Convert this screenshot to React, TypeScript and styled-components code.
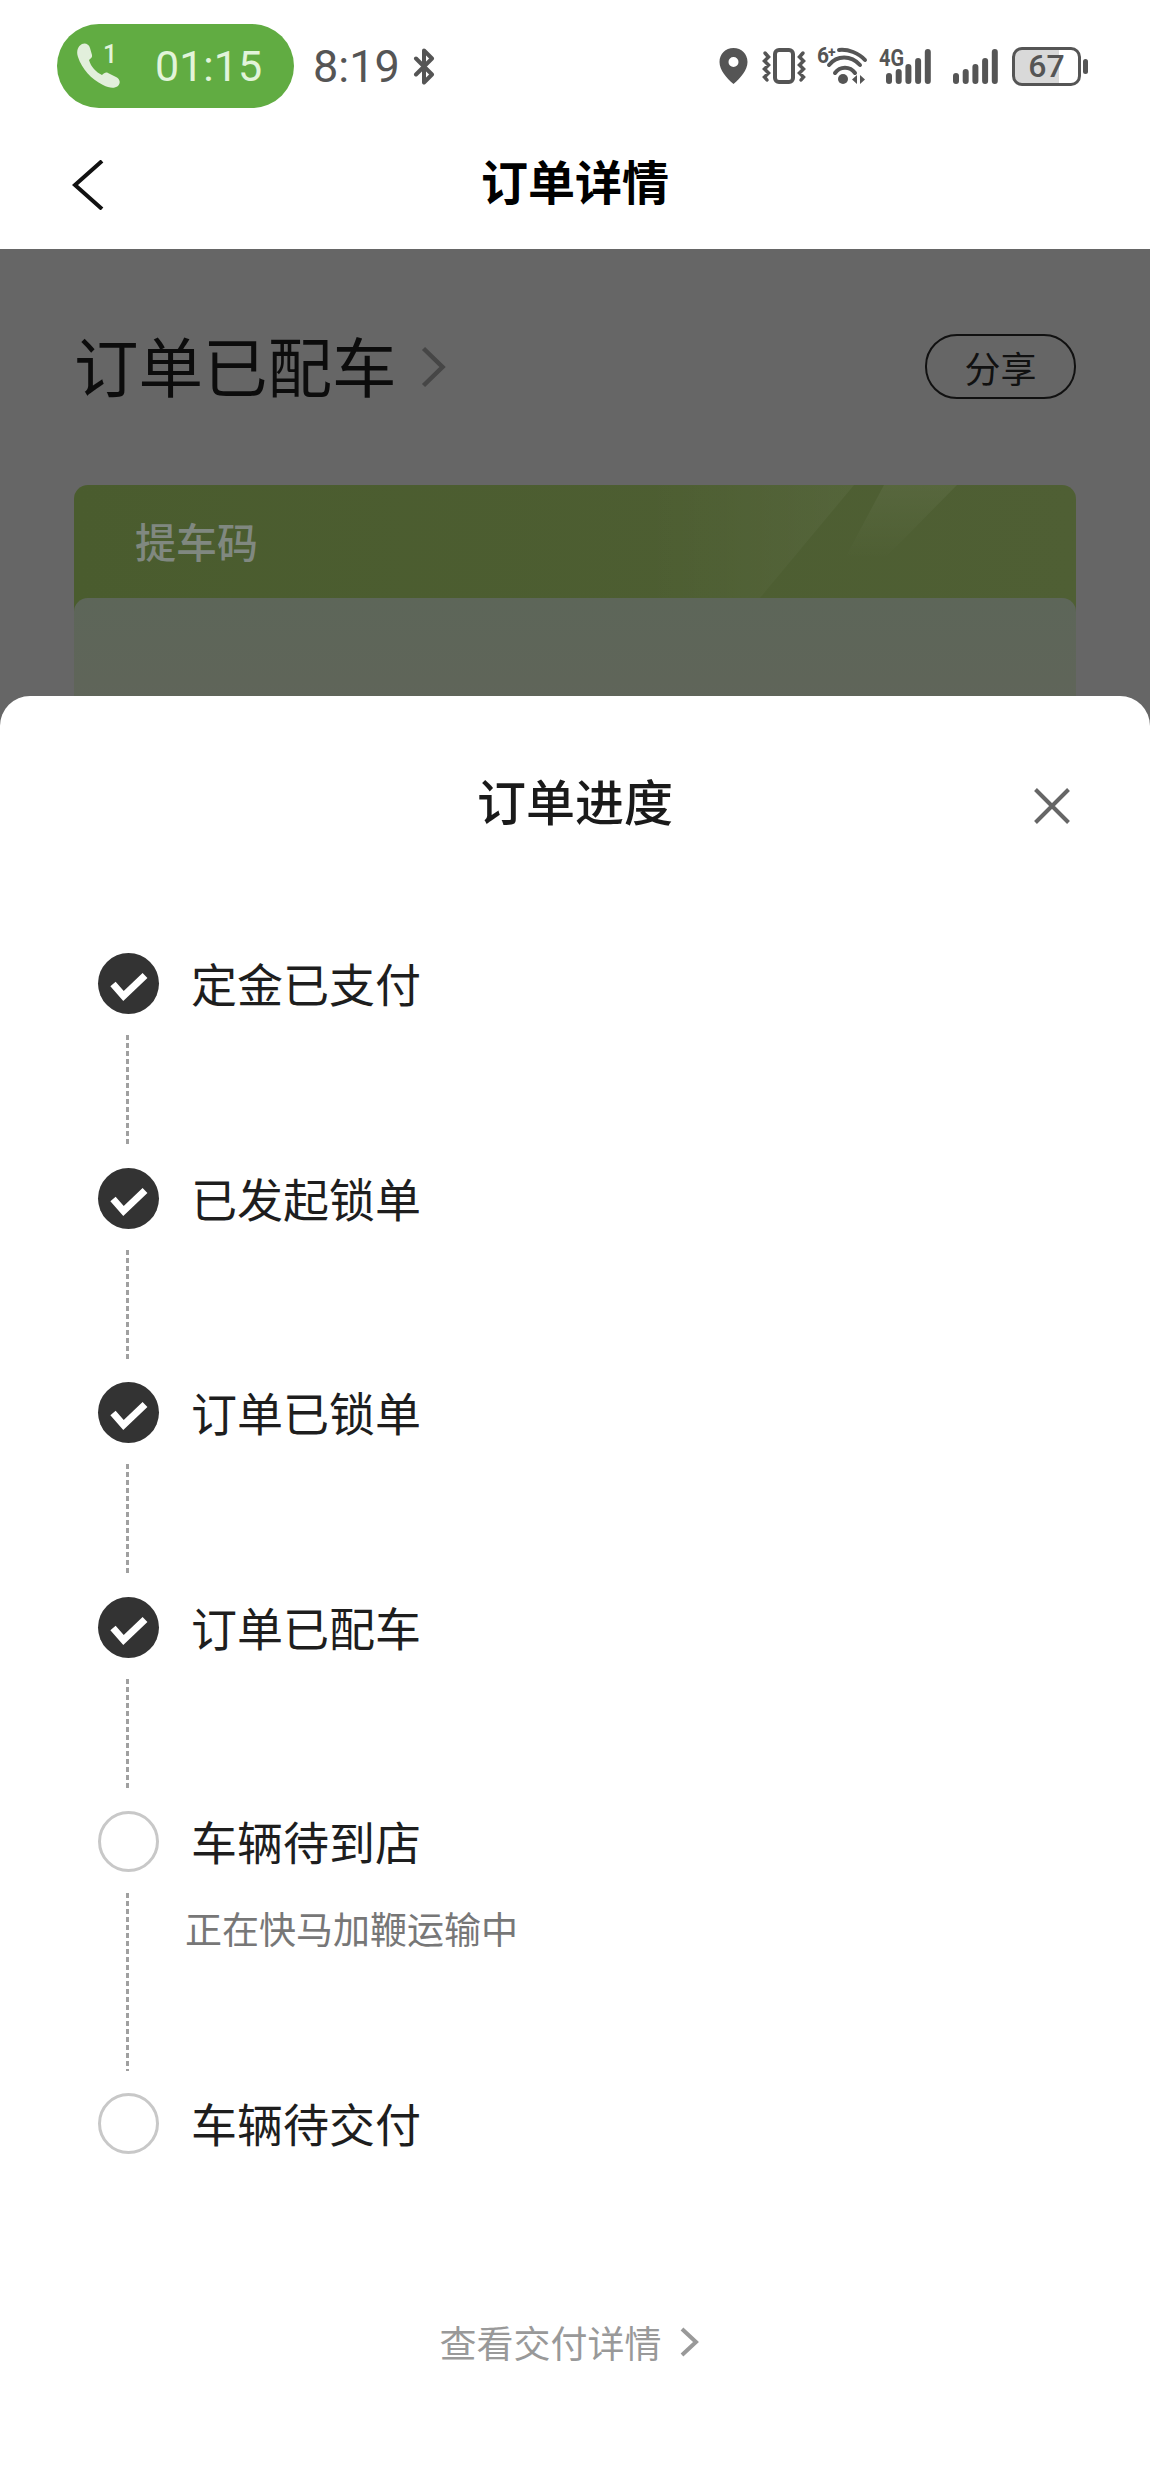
import styled, { createGlobalStyle } from "styled-components";

const GlobalStyle = createGlobalStyle`
    html, body {
        margin: 0;
        padding: 0;
        background: #fff;
    }
    * {
        box-sizing: border-box;
    }
    body {
        font-family: "Noto Sans CJK SC", "Noto Sans", sans-serif;
    }
`

const Screen = styled.div`
    width: 1150px;
    height: 2483px;
    overflow: hidden;
    background: #fff;
`

const StatusBar = styled.div`
    height: 132px;
    padding: 0 62px 0 57px;
    display: flex;
    align-items: center;
    justify-content: space-between;
    color: #555;
`

const StatusLeft = styled.div`
    display: flex;
    align-items: center;
`

const CallPill = styled.div`
    width: 237px;
    height: 84px;
    border-radius: 42px;
    background: #61ac42;
    color: #e2f4da;
    display: flex;
    align-items: center;
    padding-left: 19px;
    font-family: Roboto, sans-serif;
    font-size: 43px;
`

const CallIcon = styled.svg`
    display: block;
    overflow: visible;
`

const CallTime = styled.span`
    margin-left: 33px;
    line-height: 1;
`

const ClockText = styled.span`
    margin-left: 19px;
    margin-right: 13px;
    font-family: Roboto, sans-serif;
    font-size: 45px;
    line-height: 1;
`

const StatusRight = styled.div`
    display: flex;
    align-items: center;
`

const StatusIcon = styled.svg<{ $gap?: number }>`
    display: block;
    overflow: visible;
    margin-left: ${p => p.$gap ?? 0}px;
`

const Battery = styled.div`
    position: relative;
    width: 69px;
    height: 39px;
    margin-left: 15px;
    margin-right: 7px;
    border: 3px solid #555;
    border-radius: 10px;
    background: linear-gradient(90deg, #d9d9d9 70%, #fff 70%);
    display: flex;
    align-items: center;
    justify-content: center;
    font-family: Roboto, sans-serif;
    font-size: 32px;
    font-weight: 500;
    line-height: 1;

    &::after {
        content: "";
        position: absolute;
        right: -10px;
        top: 9px;
        width: 5px;
        height: 15px;
        border-radius: 3px;
        background: #555;
    }
`

const NavBar = styled.div`
    height: 117px;
    padding: 0 72px 21px;
    display: grid;
    grid-template-columns: 1fr auto 1fr;
    align-items: center;
`

const BackIcon = styled.svg`
    display: block;
    margin-top: 9px;
`

const NavTitle = styled.h1`
    margin: 0;
    font-size: 47px;
    font-weight: 700;
    line-height: 60px;
    color: #000;
`

const Scrim = styled.div`
    background: #666;
`

const Dimmed = styled.section`
    height: 447px;
    padding: 85px 74px 0;
    overflow: hidden;
`

const StatusRow = styled.div`
    height: 65px;
    display: flex;
    align-items: center;
    justify-content: space-between;
`

const StatusHeading = styled.div`
    display: flex;
    align-items: center;
    gap: 22px;
`

const HeadingText = styled.h2`
    margin: 0 0 4px;
    font-size: 64.5px;
    font-weight: 400;
    line-height: 65px;
    color: #0c0c0c;
`

const ShareButton = styled.button`
    width: 151px;
    height: 65px;
    border: 2px solid #111;
    border-radius: 32px;
    background: transparent;
    padding: 0;
    font-family: inherit;
    font-size: 36px;
    line-height: 1;
    color: #111;
`

const CodeCard = styled.div`
    position: relative;
    margin-top: 86px;
    height: 300px;
    border-radius: 14px;
    background: linear-gradient(90deg, #4a5c2e 0%, #4f5f34 100%);
    overflow: hidden;

    /* the two faint diagonal light bands on the card */
    &::before,
    &::after {
        content: "";
        position: absolute;
        top: 0;
        left: 0;
        right: 0;
        height: 113px;
    }

    &::before {
        background: linear-gradient(90deg, rgba(255, 255, 255, 0) 570px, rgba(255, 255, 255, 0.04) 780px);
        clip-path: polygon(560px 0, 780px 0, 686px 113px, 500px 113px);
    }

    &::after {
        background: linear-gradient(180deg, rgba(255, 255, 255, 0.05), rgba(255, 255, 255, 0) 75px);
        clip-path: polygon(810px 0, 883px 0, 809px 75px, 770px 75px);
    }
`

const CodeLabel = styled.div`
    padding: 17px 0 0 61px;
    height: 113px;
    font-size: 41px;
    font-weight: 500;
    line-height: 76px;
    color: #808880;
`

const CodeBody = styled.div`
    position: relative;
    height: 187px;
    border-radius: 14px 14px 0 0;
    background: linear-gradient(180deg, #5d6659 0%, #5f6559 45%, #62645e 100%);
`

const Sheet = styled.section`
    height: 1787px;
    border-radius: 30px 30px 0 0;
    background: #fff;
    padding: 78px 80px 0 98px;
`

const SheetHeader = styled.div`
    display: grid;
    grid-template-columns: 1fr auto 1fr;
    align-items: start;
    height: 58px;
    margin-left: -18px;
`

const SheetTitle = styled.h2`
    margin: -3px 0 0;
    font-size: 49px;
    font-weight: 500;
    line-height: 58px;
    color: #1a1a1a;
`

const CloseSlot = styled.div`
    display: flex;
    justify-content: flex-end;
    margin-top: 14px;
`

const StepList = styled.div`
    margin-top: 121px;
    display: flex;
    flex-direction: column;
`

const Step = styled.div`
    display: flex;
    gap: 32px;
`

const Rail = styled.div`
    width: 61px;
    flex: none;
    display: flex;
    flex-direction: column;
    align-items: center;
`

const Circle = styled.div<{ $done: boolean }>`
    width: 61px;
    height: 61px;
    border-radius: 50%;
    flex: none;
    background: ${p => (p.$done ? "#333" : "#fff")};
    border: ${p => (p.$done ? "none" : "3px solid #c8c8c8")};
`

const Connector = styled.div<{ $height: number }>`
    width: 3px;
    height: ${p => p.$height}px;
    margin: 21px 3px 21.5px 0;
    background: repeating-linear-gradient(180deg, #a0a0a0 0 5px, transparent 5px 8px);
`

const StepText = styled.div`
    display: flex;
    flex-direction: column;
`

const StepLabel = styled.div`
    font-size: 46px;
    line-height: 58px;
    color: #1e1e1e;
`

const StepNote = styled.div`
    margin: 36.5px 0 0 -6px;
    font-size: 37px;
    line-height: 44px;
    color: #777;
`

const DetailLink = styled.a`
    margin: 163px 0 0 -98px;
    width: 1150px;
    height: 50px;
    display: flex;
    align-items: center;
    justify-content: center;
    gap: 16px;
    padding-right: 11px;
    font-size: 37px;
    line-height: 50px;
    color: #999;
`

const Chevron = ({ w, h, color, stroke }: { w: number; h: number; color: string; stroke: number }) => (
    <svg width={w} height={h} viewBox={`0 0 ${w} ${h}`} fill="none">
        <polyline points={`${stroke},${stroke} ${w - stroke},${h / 2} ${stroke},${h - stroke}`} stroke={color} strokeWidth={stroke} />
    </svg>
)

const Bars = ({ x }: { x: number }) => (
    <>
        {[11, 15, 20, 26, 35].map((h, i) => (
            <rect key={i} x={x + i * 9.7} y={36 - h} width="6" height={h} rx="3" fill="#555" />
        ))}
    </>
)

const steps = [
    { label: "定金已支付", done: true, line: 111 },
    { label: "已发起锁单", done: true, line: 111 },
    { label: "订单已锁单", done: true, line: 111 },
    { label: "订单已配车", done: true, line: 111 },
    { label: "车辆待到店", done: false, line: 178, note: "正在快马加鞭运输中" },
    { label: "车辆待交付", done: false },
]

const App = () => {
    return (
        <Screen>
            <GlobalStyle />
            <StatusBar>
                <StatusLeft>
                    <CallPill>
                        <CallIcon width="46" height="46" viewBox="0 0 46 46">
                            <path d="M6 1C9-.5 13 1 14 5l2 7c.5 2-1 3.5-3 5 2 7 7 12 13 15 2-2 4-3 6-2l8 4c4 2 5 6 2 9-4 3-9 2-15-1C15 36 6 26 2 14 0 8 2 3 6 1Z" fill="#e2efdc" />
                            <text x="27" y="20" fontFamily="Roboto, sans-serif" fontWeight="500" fontSize="25" fill="#e2f4da">1</text>
                        </CallIcon>
                        <CallTime>01:15</CallTime>
                    </CallPill>
                    <ClockText>8:19</ClockText>
                    <svg width="22" height="37" viewBox="0 0 22 37" fill="none">
                        <path d="M3 10.5 19 26.500 11 34.500V2.500L19 10.500 3 26.500" stroke="#555" strokeWidth="4" strokeLinejoin="round" strokeLinecap="round" />
                    </svg>
                </StatusLeft>
                <StatusRight>
                    <StatusIcon width="29" height="36" viewBox="0 0 28 36">
                        <path fillRule="evenodd" d="M14 0c8 0 14 6 14 14 0 8-7 16-14 22C7 30 0 22 0 14 0 6 6 0 14 0Zm0 9a5 5 0 1 0 0 10 5 5 0 0 0 0-10Z" fill="#555" />
                    </StatusIcon>
                    <StatusIcon $gap={14} width="44" height="36" viewBox="0 0 44 36" fill="none" stroke="#555" strokeLinecap="round">
                        <rect x="13" y="2" width="18" height="32" rx="4" strokeWidth="4" />
                        <path d="M3 5 6.500 9 2.500 13 6.500 17 2.500 21 6.500 25 2.500 29 5 32M41 5 37.500 9 41.500 13 37.500 17 41.500 21 37.500 25 41.500 29 39 32" strokeWidth="3.500" />
                    </StatusIcon>
                    <StatusIcon $gap={11} width="50" height="38" viewBox="0 0 50 38" fill="none">
                        <text x="0" y="16" fontFamily="Roboto, sans-serif" fontWeight="700" fontSize="22" fill="#555" textLength="12" lengthAdjust="spacingAndGlyphs">6</text>
                        <text x="11" y="10" fontFamily="Roboto, sans-serif" fontWeight="700" fontSize="14" fill="#555">+</text>
                        <path d="M22 3C31 2 42 6 48 13M12 18C20 8 34 8 43 18M18 26C23 19 33 19 38 26" stroke="#555" strokeWidth="4" strokeLinecap="round" />
                        <circle cx="26" cy="32" r="5" fill="#555" />
                        <path d="M40 28v9l-5-4.500ZM43 28v9l5-4.500Z" fill="#555" />
                    </StatusIcon>
                    <StatusIcon $gap={12} width="52" height="37" viewBox="0 0 52 37">
                        <text x="0" y="18" fontFamily="Roboto, sans-serif" fontWeight="700" fontSize="23" fill="#555" textLength="25" lengthAdjust="spacingAndGlyphs">4G</text>
                        <Bars x={7} />
                    </StatusIcon>
                    <StatusIcon $gap={22} width="44" height="37" viewBox="0 0 44 37">
                        <Bars x={0} />
                    </StatusIcon>
                    <Battery>67</Battery>
                </StatusRight>
            </StatusBar>
            <NavBar>
                <BackIcon width="32" height="50" viewBox="0 0 32 50" fill="none">
                    <polyline points="30,1 3,25 30,49" stroke="#111" strokeWidth="4" />
                </BackIcon>
                <NavTitle>订单详情</NavTitle>
            </NavBar>
            <Scrim>
                <Dimmed>
                    <StatusRow>
                        <StatusHeading>
                            <HeadingText>订单已配车</HeadingText>
                            <Chevron w={28} h={46} color="#464646" stroke={4.500} />
                        </StatusHeading>
                        <ShareButton>分享</ShareButton>
                    </StatusRow>
                    <CodeCard>
                        <CodeLabel>提车码</CodeLabel>
                        <CodeBody />
                    </CodeCard>
                </Dimmed>
                <Sheet>
                    <SheetHeader>
                        <span />
                        <SheetTitle>订单进度</SheetTitle>
                        <CloseSlot>
                            <svg width="36" height="36" viewBox="0 0 36 36" fill="none">
                                <path d="M1.500 1.500 34.500 34.500M34.500 1.500 1.500 34.500" stroke="#666" strokeWidth="4" />
                            </svg>
                        </CloseSlot>
                    </SheetHeader>
                    <StepList>
                        {steps.map(step => (
                            <Step key={step.label}>
                                <Rail>
                                    <Circle $done={step.done}>
                                        {step.done && (
                                            <svg width="61" height="61" viewBox="0 0 61 61" fill="none">
                                                <polyline points="15,31 25.500,43 47,22.500" stroke="#fff" strokeWidth="7" />
                                            </svg>
                                        )}
                                    </Circle>
                                    {step.line && <Connector $height={step.line} />}
                                </Rail>
                                <StepText>
                                    <StepLabel>{step.label}</StepLabel>
                                    {step.note && <StepNote>{step.note}</StepNote>}
                                </StepText>
                            </Step>
                        ))}
                    </StepList>
                    <DetailLink>
                        查看交付详情
                        <Chevron w={22} h={34} color="#999" stroke={4} />
                    </DetailLink>
                </Sheet>
            </Scrim>
        </Screen>
    )
}

export default App;
